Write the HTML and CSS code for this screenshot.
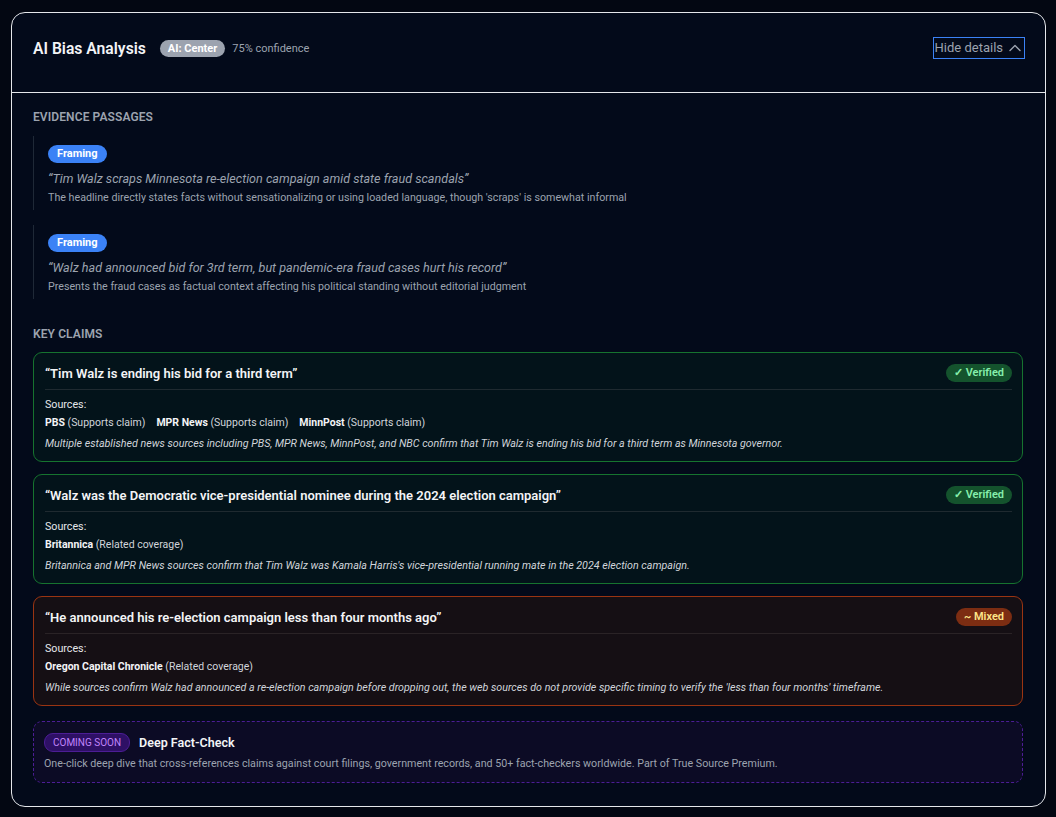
FILE: index.html
```html
<!DOCTYPE html>
<html lang="en">
<head>
<meta charset="utf-8">
<title>AI Bias Analysis</title>
<link rel="stylesheet" href="styles.css">
</head>
<body>
<div class="panel">
  <header class="panel-head">
    <div class="head-left">
      <h2 class="title">AI Bias Analysis</h2>
      <span class="pill-center">AI: Center</span>
      <span class="confidence">75% confidence</span>
    </div>
    <button class="toggle">Hide details
      <svg class="chev" width="14" height="14" viewBox="0 0 14 14"><path d="M2 9.5 L7 4.5 L12 9.5" fill="none" stroke="#9ca3af" stroke-width="1.4" stroke-linecap="round" stroke-linejoin="round"/></svg>
    </button>
  </header>
  <div class="panel-body">
    <h3 class="section-label">EVIDENCE PASSAGES</h3>
    <div class="passages">
      <div class="passage">
        <span class="tag">Framing</span>
        <p class="quote">“Tim Walz scraps Minnesota re-election campaign amid state fraud scandals”</p>
        <p class="explain">The headline directly states facts without sensationalizing or using loaded language, though 'scraps' is somewhat informal</p>
      </div>
      <div class="passage">
        <span class="tag">Framing</span>
        <p class="quote">“Walz had announced bid for 3rd term, but pandemic-era fraud cases hurt his record”</p>
        <p class="explain">Presents the fraud cases as factual context affecting his political standing without editorial judgment</p>
      </div>
    </div>

    <h3 class="section-label claims-label">KEY CLAIMS</h3>
    <div class="claims">
      <div class="claim verified">
        <div class="claim-top">
          <span class="claim-text">“Tim Walz is ending his bid for a third term”</span>
          <span class="status status-ok">✓ Verified</span>
        </div>
        <div class="sources-label">Sources:</div>
        <div class="sources">
          <span><b>PBS</b> (Supports claim)</span>
          <span><b>MPR News</b> (Supports claim)</span>
          <span><b>MinnPost</b> (Supports claim)</span>
        </div>
        <p class="claim-note">Multiple established news sources including PBS, MPR News, MinnPost, and NBC confirm that Tim Walz is ending his bid for a third term as Minnesota governor.</p>
      </div>

      <div class="claim verified">
        <div class="claim-top">
          <span class="claim-text">“Walz was the Democratic vice-presidential nominee during the 2024 election campaign”</span>
          <span class="status status-ok">✓ Verified</span>
        </div>
        <div class="sources-label">Sources:</div>
        <div class="sources">
          <span><b>Britannica</b> (Related coverage)</span>
        </div>
        <p class="claim-note">Britannica and MPR News sources confirm that Tim Walz was Kamala Harris's vice-presidential running mate in the 2024 election campaign.</p>
      </div>

      <div class="claim mixed">
        <div class="claim-top">
          <span class="claim-text">“He announced his re-election campaign less than four months ago”</span>
          <span class="status status-mixed">~ Mixed</span>
        </div>
        <div class="sources-label">Sources:</div>
        <div class="sources">
          <span><b>Oregon Capital Chronicle</b> (Related coverage)</span>
        </div>
        <p class="claim-note">While sources confirm Walz had announced a re-election campaign before dropping out, the web sources do not provide specific timing to verify the 'less than four months' timeframe.</p>
      </div>

      <div class="premium">
        <div class="premium-top">
          <span class="soon">COMING SOON</span>
          <span class="premium-title">Deep Fact-Check</span>
        </div>
        <p class="premium-desc">One-click deep dive that cross-references claims against court filings, government records, and 50+ fact-checkers worldwide. Part of True Source Premium.</p>
      </div>
    </div>
  </div>
</div>
</body>
</html>
```

FILE: styles.css
```css
* { box-sizing: border-box; }
html, body { margin: 0; padding: 0; }
body {
  background: #030712;
  font-family: Roboto, "Noto Sans", "Liberation Sans", sans-serif;
  color: #e5e7eb;
  padding: 12px 10px 11px 11px;
}
.panel {
  border: 1px solid #e5e7eb;
  border-radius: 14px;
  background: #030a1a;
  overflow: hidden;
}
.panel-head {
  height: 80px;
  display: flex;
  align-items: center;
  justify-content: space-between;
  padding: 0 20px 9px 21px;
  border-bottom: 1px solid #e5e7eb;
}
.head-left { display: flex; align-items: center; }
.title {
  margin: 0;
  font-size: 15.7px;
  font-weight: 600;
  color: #f3f4f6;
}
.pill-center {
  margin-left: 14px;
  background: #9ca3af;
  color: #fff;
  font-size: 11px;
  font-weight: 700;
  padding: 2px 8px;
  border-radius: 9px;
  line-height: 13px;
}
.confidence {
  margin-left: 7px;
  font-size: 11px;
  color: #9ca3af;
}
.toggle {
  display: flex;
  align-items: center;
  gap: 5px;
  background: transparent;
  border: 1px solid #3b82f6;
  color: #9ca3af;
  font-family: inherit;
  font-size: 13px;
  padding: 1px 2px 2px 1px;
  height: 22px;
  margin-top: 0;
}
.chev { display: block; }
.panel-body { padding: 17px 22px 23px 21px; }
.section-label {
  margin: 0;
  font-size: 12px;
  font-weight: 600;
  color: #9ca3af;
  letter-spacing: 0.1px;
}
.passages {
  margin-top: 12px;
  display: flex;
  flex-direction: column;
  gap: 15px;
}
.passage {
  border-left: 1px solid #1f2937;
  padding: 6px 0 5px 14px;
}
.tag {
  display: inline-block;
  background: #3b82f6;
  color: #fff;
  font-size: 11px;
  font-weight: 700;
  padding: 2px 9px;
  border-radius: 9px;
  line-height: 14px;
}
.quote {
  margin: 7px 0 0;
  font-size: 12.6px;
  font-style: italic;
  color: #9ca3af;
  line-height: 18px;
}
.explain {
  margin: 2px 0 0;
  font-size: 10.7px;
  color: #9ca3af;
  line-height: 15px;
}
.claims-label { margin-top: 28px; }
.claims {
  margin-top: 11px;
  display: flex;
  flex-direction: column;
  gap: 12px;
}
.claim {
  border: 1px solid #15803d;
  border-radius: 9px;
  padding: 11px 10px 12px 11px;
  height: 110px;
}
.claim.verified { background: #03131a; border-color: #16732f; }
.claim.mixed { background: #150f14; border-color: #9a3412; }
.claim-top {
  display: flex;
  align-items: center;
  justify-content: space-between;
  padding-bottom: 7px;
  border-bottom: 1px solid #1f2a30;
}
.claim.mixed .claim-top { border-bottom-color: #2a2326; }
.claim-text {
  font-size: 13px;
  font-weight: 600;
  color: #f3f4f6;
}
.status {
  font-size: 11px;
  font-weight: 600;
  padding: 2px 8px;
  border-radius: 9px;
  line-height: 14px;
}
.status-ok { background: #14532d; color: #86efac; }
.status-mixed { background: #7c2d12; color: #fde68a; }
.sources-label {
  margin-top: 7px;
  font-size: 10.7px;
  color: #e5e7eb;
  line-height: 15px;
}
.sources {
  margin-top: 3px;
  display: flex;
  gap: 11px;
  font-size: 10.5px;
  color: #d1d5db;
  line-height: 15px;
}
.sources b { color: #f3f4f6; font-weight: 700; }
.claim-note {
  margin: 7px 0 0;
  font-size: 10.7px;
  font-style: italic;
  color: #d1d5db;
  line-height: 14px;
}
.premium {
  margin-top: 3px;
  border: 1px dashed #4c1d95;
  border-radius: 9px;
  background: #0c0b25;
  padding: 11px 11px 11px 10px;
  height: 62px;
}
.premium-top { display: flex; align-items: center; gap: 9px; }
.soon {
  font-size: 10px;
  color: #c084fc;
  background: #2e1065;
  border: 1px solid #4c1d95;
  border-radius: 9px;
  padding: 2px 8px;
  line-height: 13px;
}
.premium-title {
  font-size: 12.5px;
  font-weight: 600;
  color: #f3f4f6;
}
.premium-desc {
  margin: 4px 0 0;
  font-size: 10.7px;
  color: #9ca3af;
  line-height: 15px;
}
```
